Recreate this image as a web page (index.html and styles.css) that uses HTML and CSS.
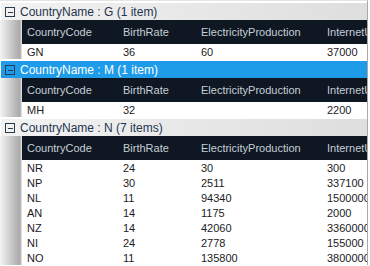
FILE: index.html
```html
<!DOCTYPE html>
<html lang="en">
<head>
    <meta charset="UTF-8">
    <title>Grouped Grid</title>
    <link rel="stylesheet" href="styles.css">
</head>
<body>
    <div class="grid">
        <div class="group">
            <div class="group-header">
                <span class="toggle"></span>
                <span class="group-title">CountryName : G (1 item)</span>
            </div>
            <div class="group-body">
                <div class="indent"></div>
                <div class="table">
                    <div class="row head">
                        <div>CountryCode</div><div>BirthRate</div><div>ElectricityProduction</div><div>InternetUsers</div>
                    </div>
                    <div class="row"><div>GN</div><div>36</div><div>60</div><div>37000</div></div>
                </div>
            </div>
        </div>

        <div class="group selected">
            <div class="group-header">
                <span class="toggle"></span>
                <span class="group-title">CountryName : M (1 item)</span>
            </div>
            <div class="group-body">
                <div class="indent"></div>
                <div class="table">
                    <div class="row head">
                        <div>CountryCode</div><div>BirthRate</div><div>ElectricityProduction</div><div>InternetUsers</div>
                    </div>
                    <div class="row"><div>MH</div><div>32</div><div></div><div>2200</div></div>
                </div>
            </div>
        </div>

        <div class="group">
            <div class="group-header">
                <span class="toggle"></span>
                <span class="group-title">CountryName : N (7 items)</span>
            </div>
            <div class="group-body">
                <div class="indent"></div>
                <div class="table">
                    <div class="row head">
                        <div>CountryCode</div><div>BirthRate</div><div>ElectricityProduction</div><div>InternetUsers</div>
                    </div>
                    <div class="row"><div>NR</div><div>24</div><div>30</div><div>300</div></div>
                    <div class="row"><div>NP</div><div>30</div><div>2511</div><div>337100</div></div>
                    <div class="row"><div>NL</div><div>11</div><div>94340</div><div>15000000</div></div>
                    <div class="row"><div>AN</div><div>14</div><div>1175</div><div>2000</div></div>
                    <div class="row"><div>NZ</div><div>14</div><div>42060</div><div>3360000</div></div>
                    <div class="row"><div>NI</div><div>24</div><div>2778</div><div>155000</div></div>
                    <div class="row"><div>NO</div><div>11</div><div>135800</div><div>3800000</div></div>
                </div>
            </div>
        </div>
    </div>
</body>
</html>
```

FILE: styles.css
```css
body {
    margin: 0;
    background: #ffffff;
    font-family: 'Liberation Sans', Arial, sans-serif;
    font-size: 12px;
}
.grid {
    width: 368px;
    height: 265px;
    padding-top: 2px;
    box-sizing: border-box;
    border-top: 1px solid #e4e4e4;
    border-right: 1px solid #a8a8a8;
    overflow: hidden;
    background: #ffffff;
}
.group {
    padding-bottom: 2px;
}
.group-header {
    height: 17px;
    margin-left: 1px;
    display: flex;
    align-items: center;
    gap: 5px;
    padding-left: 4px;
    background: linear-gradient(to right, #f2f2f2, #dedede);
    color: #1f3550;
}
.selected .group-header {
    background: #1e9be9;
    color: #ffffff;
}
.toggle {
    width: 8px;
    height: 8px;
    border: 1px solid #2a3b4e;
    position: relative;
    flex-shrink: 0;
}
.toggle::after {
    content: '';
    position: absolute;
    left: 2px;
    top: 4px;
    width: 5px;
    height: 1px;
    background: #2a3b4e;
}
.group-body {
    display: flex;
}
.indent {
    width: 22px;
    flex-shrink: 0;
    background: linear-gradient(to right, #f4f4f4, #a9a9a9 90%, #e8e8e8);
}
.table {
    flex: 1;
    overflow: hidden;
}
.row {
    display: grid;
    grid-template-columns: 96px 78px 126px 1fr;
    height: 15px;
    align-items: center;
    font-size: 11px;
    color: #1b1b24;
    white-space: nowrap;
}
.row div {
    padding-left: 5px;
    overflow: hidden;
}
.row.head {
    height: 24px;
    background: #0f1822;
    color: #c6ced8;
}
```
